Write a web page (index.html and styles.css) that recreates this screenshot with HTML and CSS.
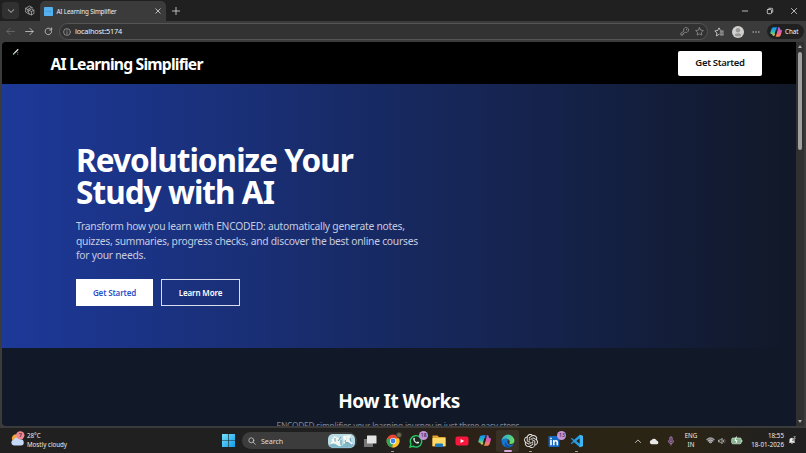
FILE: index.html
```html
<!DOCTYPE html>
<html lang="en">
<head>
<meta charset="utf-8">
<title>AI Learning Simplifier</title>
<link rel="stylesheet" href="styles.css">
</head>
<body>
<svg class="defs" width="0" height="0" aria-hidden="true">
  <defs>
    <linearGradient id="copA" x1="0" y1="0" x2="0" y2="1"><stop offset="0" stop-color="#168cf0"/><stop offset=".5" stop-color="#25b9c5"/><stop offset="1" stop-color="#e2cf35"/></linearGradient>
    <linearGradient id="copB" x1="0" y1="0" x2="0" y2="1"><stop offset="0" stop-color="#a267ed"/><stop offset=".55" stop-color="#ed5c9b"/><stop offset="1" stop-color="#fa8950"/></linearGradient>
    <linearGradient id="edgeA" x1="0" y1="0" x2="1" y2=".4"><stop offset="0" stop-color="#27a5e8"/><stop offset="1" stop-color="#66dc65"/></linearGradient>
    <linearGradient id="win" x1="0" y1="0" x2="1" y2="1"><stop offset="0" stop-color="#73e0fc"/><stop offset="1" stop-color="#109de9"/></linearGradient>
    <symbol id="copilot" viewBox="0 0 24 24">
      <path d="M16 2.500h1.500c1.500 0 2 1 2.500 3l.5 2H22c2 0 2 2 1.500 4l-1.800 6c-.8 2.500-2 4-4 4H9.500c1.500 0 2.300-1 2.800-3l3-11c.6-2 1.200-3 .7-5z" fill="url(#copB)"/>
      <path d="M8 2.500h8c-1.500 0-2.500 1-3 3l-3 11c-.5 2-1.300 3-3 3-1.500 0-2-1-2.500-2.500L4 16H2.500C.5 16 .5 14 1 12l2-6c.8-2.200 2.500-3.500 5-3.500z" fill="url(#copA)"/>
      <path d="M11.500 8h3.200l-2.300 8H9.200z" fill="#202020"/>
    </symbol>
  </defs>
</svg>
<div class="desktop">
  <header class="tabstrip">
    <span class="tab-menu"><svg class="i8" viewBox="0 0 8 8"><path class="ln" d="M1.200 2.700 4 5.400l2.800-2.700"/></svg></span>
    <svg class="workspaces" viewBox="0 0 20 20"><path class="ln w2" d="M10 17 3 13V6l7-4 6 3.500M3 6l4 2.300M7 12V8l6-3.500M9 9.500l4.500-2.300L18 9.500v6L13.500 18 9 15.500zM9 9.500l4.500 2.300L18 9.500M13.500 12v6"/></svg>
    <div class="tab">
      <svg class="favicon" viewBox="0 0 9 9"><rect width="9" height="9" rx=".7" fill="#54b0ee"/><path d="M1.500 4.500h1.200m.6-.4h1.200m.7.600h2" stroke="#1680cf" stroke-width=".5"/></svg>
      <span class="tab-title">AI Learning Simplifier</span>
      <svg class="tab-close" viewBox="0 0 8 8"><path class="ln" d="m1.800 1.800 4.400 4.400m0-4.400L1.800 6.200"/></svg>
    </div>
    <svg class="new-tab" viewBox="0 0 8 8"><path class="ln" d="M4 .2v7.600M.2 4h7.600"/></svg>
    <div class="window-controls">
      <svg class="i8" viewBox="0 0 8 8"><path class="ln" d="M1.300 4h5.400"/></svg>
      <svg class="i8" viewBox="0 0 8 8"><rect class="ln" x="1.300" y="2.500" width="4.200" height="4.200" rx=".7"/><path class="ln" d="M2.800 1.300h3q.9 0 .9.900v3"/></svg>
      <svg class="i8" viewBox="0 0 8 8"><path class="ln" d="m1.400 1.400 5.200 5.200m0-5.200L1.400 6.600"/></svg>
    </div>
  </header>

  <div class="toolbar">
    <svg class="nav dim" viewBox="0 0 10 10"><path class="ln" d="M9.300 5H1m3.500-3.500L1 5l3.500 3.500"/></svg>
    <svg class="nav" viewBox="0 0 10 10"><path class="ln" d="M.7 5H9M5.500 1.500 9 5 5.500 8.500"/></svg>
    <svg class="nav" viewBox="0 0 10 10"><path class="ln" d="M8.500 5A3.600 3.600 0 1 1 7.400 2.300L8.500 3.300M8.500 1v2.400H6.200"/></svg>
    <div class="address">
      <svg class="info" viewBox="0 0 8 8"><circle class="ln thin" cx="4" cy="4" r="3.400"/><path class="ln thin" d="M4 3.600V6M4 2v.3"/></svg>
      <span class="url">localhost:5174</span>
      <svg class="key" viewBox="0 0 10 10"><path class="ln thin" d="M4.100 4.300A2.800 2.800 0 1 1 6 6L5 6.200 4.600 7H3.800v.9H3V9H1V7.300z"/><circle cx="7.200" cy="2.900" r=".6" fill="#aaa"/></svg>
      <svg class="star" viewBox="0 0 10 10"><path class="ln thin" d="m5 .8 1.300 2.700 3 .4-2.200 2.100.5 3L5 7.600 2.400 9l.5-3L.7 3.900l3-.4z"/></svg>
    </div>
    <svg class="favs" viewBox="0 0 10 10"><path class="ln" d="M5.200 7.300 2.400 8.900l.5-2.900L.8 3.900l2.900-.4L5 .9l1.100 2M6.300 4.100h3M6.300 6h3M6.500 7.900h2.800"/></svg>
    <svg class="avatar" viewBox="0 0 12 12"><circle cx="6" cy="6" r="6" fill="#d2d0ce"/><circle cx="6" cy="4.300" r="2.200" fill="#9a9896"/><path d="M2.600 9.500c0-3 6.800-3 6.800 0Q6 11.500 2.600 9.500" fill="#9a9896"/></svg>
    <svg class="dots" viewBox="0 0 8 8"><path d="M.5 3.500h1.300v1.100H.5zm2.800 0h1.300v1.100H3.300zm2.800 0h1.300v1.100H6.100z" fill="#ddd"/></svg>
    <div class="chat"><svg viewBox="0 0 24 24"><use href="#copilot"/></svg><span>Chat</span></div>
  </div>

  <div class="viewport">
    <main class="page">
      <nav class="site-nav">
        <svg class="mark" viewBox="0 0 8 8"><path d="M1.200 6.400 6.200 1.300" stroke="#e4e4e4" stroke-width="1.300"/><path d="m1 6.900 2.200-2.100M5.300 4.500h1M5.100 6.200h1" stroke="#55a15e" stroke-width="1"/></svg>
        <span class="brand">AI Learning Simplifier</span>
        <a class="nav-cta"><span>Get Started</span></a>
      </nav>
      <section class="hero">
        <h1>Revolutionize Your<br>Study with AI</h1>
        <p>Transform how you learn with ENCODED: automatically generate notes,<br>quizzes, summaries, progress checks, and discover the best online courses<br>for your needs.</p>
        <div class="actions">
          <a class="btn primary">Get Started</a>
          <a class="btn outline">Learn More</a>
        </div>
      </section>
      <section class="how">
        <h2>How It Works</h2>
        <p>ENCODED simplifies your learning journey in just three easy steps.</p>
      </section>
    </main>
    <div class="scrollbar"><span class="up"></span><span class="thumb"></span><span class="down"></span></div>
  </div>

  <footer class="taskbar">
    <div class="weather">
      <svg viewBox="0 0 16 17"><circle cx="6.500" cy="8" r="4.500" fill="#f2a33c"/><path d="M4 15.500a3.200 3.200 0 0 1 0-6.300 4 4 0 0 1 7-.5 3.400 3.400 0 0 1 .5 6.800z" fill="#c5dafa"/><circle cx="11" cy="4.500" r="4.400" fill="#ee8890"/><path d="M9.500 2.800h3L10.700 6.500" fill="none" stroke="#542a35" stroke-width=".8"/></svg>
      <div><span class="temp">28°C</span><span class="cloudy">Mostly cloudy</span></div>
    </div>
    <svg class="start" viewBox="0 0 13 13"><path fill="url(#win)" d="M0 0h6.200v6.200H0zm6.800 0H13v6.200H6.800zM0 6.800h6.200V13H0zm6.800 0H13V13H6.800z"/></svg>
    <div class="search">
      <svg class="lens" viewBox="0 0 9 9"><circle class="ln" cx="3.700" cy="3.700" r="2.800"/><path class="ln" d="m5.800 5.800 2.400 2.400"/></svg>
      <span>Search</span>
      <svg class="art" viewBox="0 0 27 14"><rect width="27" height="14" rx="5" fill="#b9dce4"/><path d="M2 11 6 2l5 2 2 8zM15 2l8-1-2 7-5 2z" fill="#f0f6ef"/><path d="M1 11q5-3 8 0t7-1 10 1q-2 3-6 2.700H6Q2 14 1 11" fill="#80b7c9"/><path d="M7 4v4M10 7l3-4M13 6v5M18 4l-1 4 3 1M22 4l1 4" stroke="#4a8baa" stroke-width=".8" fill="none"/><path d="m4 5 3 4m9-7 2 4m3 1 3 3" stroke="#fff" stroke-width="1.200"/></svg>
    </div>
    <div class="apps">
      <span class="app"><svg viewBox="0 0 14 14"><rect x="1" y="5" width="9" height="8" fill="#777"/><rect x="4" y="1.500" width="9.500" height="8" rx=".5" fill="#e4e4e4"/></svg></span>
      <span class="app run"><svg viewBox="0 0 14 14"><circle cx="7" cy="7" r="6.500" fill="#e84636"/><path d="M7 7 1.300 3.900A6.500 6.500 0 0 0 6.500 13.500z" fill="#2fa854"/><path d="M7 7 6.400 13.500A6.500 6.500 0 0 0 13 4.500H7z" fill="#fbc52c"/><circle cx="7" cy="7" r="3.100" fill="#fff"/><circle cx="7" cy="7" r="2.400" fill="#3e82ee"/></svg><i class="profile"></i></span>
      <span class="app"><svg viewBox="0 0 14 14"><path d="m1 13 .9-3.100A5.700 5.700 0 1 1 4 12.200z" fill="#1d2620" stroke="#25c763" stroke-width="1.400"/><path d="M4.400 4.200c.7-1 1.400-.1 1.700.8L5.500 6c.7 1.300 1.400 1.800 2.400 2.300l.9-.7c1.700.7 1.700 1 .9 1.700C7.500 10.800 3.600 6.700 4.400 4.200" fill="#e3f5e7"/></svg><b class="badge">18</b></span>
      <span class="app"><svg viewBox="0 0 14 14"><path d="M.5 1.500h5L7 3h6.500v9.500H.5z" fill="#e5a52c"/><path d="M.5 4h13v8H.5z" fill="#ffda68"/><path d="M3 13v-2.500q0-1 1-1h6q1 0 1 1V13z" fill="#1b76bb"/></svg></span>
      <span class="app"><svg viewBox="0 0 14 14"><rect x=".5" y="2.500" width="13" height="9" rx="2" fill="#fa173d"/><path d="m5.600 4.900 3.600 2.100-3.600 2.100z" fill="#fff"/></svg></span>
      <span class="app"><svg class="cop" viewBox="0 0 24 24"><use href="#copilot"/></svg></span>
      <span class="app active"><svg viewBox="0 0 14 14"><path d="M.6 7A6.400 6.400 0 0 1 13.400 7c0 2-1.600 3-3.500 3-1.700 0-1.800-.7-1.300-1.500C9.800 5 4 3 .6 7" fill="url(#edgeA)"/><path d="M.6 7.200C1.500 4 6.500 3.600 7.500 6c-2 .5-1.700 5 2.500 4.900q1.400 0 2.600-.8A6.400 6.400 0 0 1 .6 7.200" fill="#1676d2"/><path d="M4.700 8c0 3 3 4.600 6.500 3.600A6.400 6.400 0 0 1 6 13.400C3.500 12 3.200 9 4.700 8" fill="#104d9d"/></svg></span>
      <span class="app run"><svg viewBox="0 0 24 24"><path fill="#e8e8e8" d="M22.282 9.821a5.985 5.985 0 0 0-.516-4.911 6.046 6.046 0 0 0-6.510-2.900A6.065 6.065 0 0 0 4.981 4.182a5.985 5.985 0 0 0-3.998 2.900 6.046 6.046 0 0 0 .743 7.097 5.980 5.980 0 0 0 .511 4.911 6.051 6.051 0 0 0 6.515 2.900A5.985 5.985 0 0 0 13.260 24a6.056 6.056 0 0 0 5.772-4.206 5.990 5.990 0 0 0 3.998-2.900 6.056 6.056 0 0 0-.748-7.073zM13.260 22.430a4.476 4.476 0 0 1-2.876-1.041l.141-.080 4.779-2.758a.795.795 0 0 0 .393-.681v-6.737l2.020 1.169a.071.071 0 0 1 .038.052v5.583a4.504 4.504 0 0 1-4.495 4.493zM3.600 18.304a4.471 4.471 0 0 1-.535-3.014l.142.085 4.783 2.759a.771.771 0 0 0 .780 0l5.843-3.369v2.332a.080.080 0 0 1-.033.062L9.740 19.950a4.500 4.500 0 0 1-6.140-1.646zM2.341 7.896a4.485 4.485 0 0 1 2.365-1.973V11.600a.766.766 0 0 0 .388.677l5.815 3.354-2.020 1.169a.076.076 0 0 1-.071 0l-4.830-2.786A4.504 4.504 0 0 1 2.341 7.872zm16.596 3.855-5.833-3.387L15.119 7.200a.076.076 0 0 1 .071 0l4.830 2.791a4.494 4.494 0 0 1-.676 8.105v-5.678a.790.790 0 0 0-.407-.667zm2.011-3.023-.142-.085-4.774-2.782a.776.776 0 0 0-.785 0L9.409 9.230V6.897a.066.066 0 0 1 .028-.061l4.830-2.787a4.499 4.499 0 0 1 6.681 4.660zM8.307 12.863l-2.020-1.164a.080.080 0 0 1-.038-.057V6.074a4.499 4.499 0 0 1 7.376-3.453l-.142.080-4.778 2.758a.795.795 0 0 0-.393.681zm1.097-2.365L12.006 8.998l2.607 1.500v2.999l-2.597 1.500-2.607-1.500z"/></svg></span>
      <span class="app"><svg viewBox="0 0 14 14"><rect x="1.500" y="2" width="11" height="11" rx="1" fill="#1268c3"/><path d="M3.200 6h1.600v5.200H3.200zm0-2.200h1.600v1.400H3.200zM6 6h1.500v.7c.9-1.200 3.600-1.100 3.600 1.500v3H9.500V8.500C9.500 7 7.600 7 7.600 8.500v2.700H6z" fill="#fff"/></svg><b class="badge">13</b></span>
      <span class="app run"><svg viewBox="0 0 14 14"><path d="M9.800.7 13 2.100v9.800l-3.200 1.400L4 8.200l-2.300 1.900L.7 9.500 3.200 7 .7 4.500l1-.6L4 5.800zm0 3.500L6.300 7l3.500 2.800z" fill="#239ce4"/><path d="M9.800.7 13 2.100v9.800l-3.200 1.400z" fill="#42b5f3"/></svg></span>
    </div>
    <div class="tray">
      <svg class="chev" viewBox="0 0 8 8"><path class="ln" d="m1.500 5.500 2.500-2.600 2.500 2.600"/></svg>
      <svg class="cloud" viewBox="0 0 10 8"><path d="M2.500 7.300A2.200 2.200 0 0 1 2.600 3a3 3 0 0 1 5.300.8 1.800 1.800 0 0 1 .1 3.500z" fill="#e8e8e8"/></svg>
      <svg class="mic" viewBox="0 0 8 10"><rect x="2.800" y=".8" width="2.400" height="5.300" rx="1.200" fill="#5d3b67" stroke="#c292d0" stroke-width=".7"/><path d="M1.400 4.500c0 4 5.200 4 5.200 0M4 7.500v2" fill="none" stroke="#c292d0" stroke-width=".8"/></svg>
      <div class="lang"><span>ENG</span><span>IN</span></div>
      <svg class="wifi" viewBox="0 0 10 9"><path d="M.7 3.400q4.300-4 8.600 0L5 8.200z" fill="#777"/><path class="ln" d="M.7 3.400q4.300-4 8.600 0M2.200 5q2.800-2.500 5.600 0M3.700 6.500q1.300-1 2.600 0"/></svg>
      <svg class="sound" viewBox="0 0 9 9"><path class="ln" d="M1 3.500h1.500L4.500 1.500v6l-2-2H1zM6 3.300q1 1.200 0 2.400"/><path d="M7.200 2q2 2.500 0 5" fill="none" stroke="#777" stroke-width=".7"/></svg>
      <svg class="battery" viewBox="0 0 12 9"><rect x=".7" y="2" width="9.600" height="5.800" rx="1.400" fill="#83b38c" stroke="#d9e5da" stroke-width=".7"/><path d="M10.800 4v2" stroke="#ddd"/><path d="M5.500.5 4 4.500h2L5 7" stroke="#f1fff2" stroke-width="1" fill="none"/></svg>
      <div class="clock"><span>18:55</span><span>18-01-2026</span></div>
      <svg class="bell" viewBox="0 0 9 10"><path d="M1 7.500 1.700 6V3.700a3 3 0 0 1 5.600 0V6L8 7.500zM3.300 8h2.400q-1.200 1.800-2.400 0" fill="#eee"/><path d="M4.800 3.200h1.700L5 5.200h1.700" stroke="#222" stroke-width=".6" fill="none"/><path d="M6.300.6h2L6.700 2.600h2" stroke="#eee" stroke-width=".6" fill="none"/></svg>
    </div>
  </footer>
</div>
</body>
</html>
```
FILE: styles.css
```css
* { box-sizing: border-box; }
body { margin: 0; overflow: hidden; background: #3b3b3b; font-family: "Noto Sans", "Open Sans", sans-serif; color: #fff; }
svg { display: block; flex: none; }
span { white-space: nowrap; }
.defs { position: absolute; }
.desktop { width: 806px; height: 453px; display: flex; flex-direction: column; }
.ln { fill: none; stroke: #ddd; stroke-width: .8; stroke-linecap: round; stroke-linejoin: round; }
.ln.thin { stroke: #aaa; stroke-width: .7; }
.ln.w2 { stroke: #bbb; stroke-width: 1.300; }
.i8 { width: 8px; height: 8px; }

.tabstrip { height: 21px; flex: none; display: flex; align-items: center; background: #202020; }
.tab-menu { width: 17px; height: 17px; margin-left: 2px; border-radius: 4px; background: #313131; display: grid; place-items: center; }
.workspaces { width: 11px; height: 11px; margin-left: 5px; }
.tab { width: 126px; height: 20px; margin: 1px 0 0 5px; padding-left: 4px; border-radius: 5px 5px 0 0; background: #3b3b3b; display: flex; align-items: center; }
.favicon { width: 9px; height: 9px; }
.tab-title { margin-left: 3.500px; width: 60px; font-size: 6.300px; letter-spacing: -.17px; color: #eee; }
.tab-close { width: 8px; height: 8px; margin-left: 37px; }
.new-tab { width: 8px; height: 8px; margin-left: 6px; }
.window-controls { margin-left: auto; padding-right: 8px; display: flex; gap: 16.500px; }

.toolbar { height: 21px; flex: none; display: flex; align-items: center; background: #3b3b3b; padding-left: 6px; }
.nav { width: 9px; height: 9px; margin-right: 10px; }
.dim { opacity: .35; }
.address { width: 649px; height: 17px; margin-left: -4px; border: 1px solid #555; border-radius: 9px; background: #323232; display: flex; align-items: center; padding: 0 3px 0 3px; }
.info { width: 8px; height: 8px; }
.url { margin-left: 4px; margin-top: -1px; font-size: 7.300px; letter-spacing: -.17px; color: #f0f0f0; }
.key { width: 9px; height: 9px; margin-left: auto; }
.star { width: 9px; height: 9px; margin-left: 6px; }
.favs { width: 10px; height: 10px; margin-left: 6px; }
.avatar { width: 12px; height: 12px; margin-left: 8px; }
.dots { width: 8px; height: 8px; margin-left: 8px; }
.chat { width: 37px; height: 15px; margin-left: 7px; border-radius: 8px; background: #202020; display: flex; align-items: center; font-size: 6.200px; }
.chat svg { width: 12px; height: 12px; margin: 0 3px; }

.viewport { height: 384px; flex: none; margin-left: 2px; display: flex; }
.page { width: 794px; height: 384px; overflow: hidden; background: #111827; border-radius: 4px 0 0 4px; }
.site-nav { height: 42px; background: #000; display: flex; align-items: center; }
.mark { width: 8px; height: 8px; margin: -22px 0 0 10px; }
.brand { margin: 2px auto 0 30.500px; font-size: 15.700px; font-weight: 700; letter-spacing: -.8px; }
.nav-cta { width: 84px; height: 25px; margin: 0 34px 0 0; padding-bottom: 2px; border-radius: 2px; background: #fff; color: #141414; display: grid; place-items: center; font-size: 9.500px; font-weight: 600; letter-spacing: -.33px; }
.hero { height: 264px; padding: 60px 0 0 74px; background: linear-gradient(to right, #1d3999, #111827); }
.hero h1 { margin: 0; font-size: 31.500px; line-height: 31.500px; font-weight: 700; letter-spacing: -.95px; }
.hero p { margin: 12px 0 0; font-size: 10.300px; line-height: 14.700px; letter-spacing: -.25px; color: #c5cce0; }
.actions { display: flex; gap: 8px; margin-top: 16px; }
.btn { display: grid; place-items: center; height: 27px; font-size: 8px; font-weight: 600; letter-spacing: -.13px; }
.primary { width: 77px; padding-bottom: 1px; background: #fff; color: #2b50c8; }
.outline { width: 79px; border: 1px solid #d9deed; }
.how { padding-top: 40px; text-align: center; }
.how h2 { margin: 0; font-size: 19px; line-height: 26px; font-weight: 700; letter-spacing: -.5px; }
.how p { margin: 5px 0 0; font-size: 8.300px; line-height: 14px; letter-spacing: -.2px; color: #818895; }

.scrollbar { width: 8px; background: #303030; display: flex; flex-direction: column; align-items: center; }
.up { border: 2px solid transparent; border-top: 0; border-bottom: 3px solid #aaa; margin: 3px 0 4px; }
.thumb { width: 4px; height: 98px; border-radius: 2px; background: #a0a0a0; }
.down { border: 2px solid transparent; border-bottom: 0; border-top: 3px solid #aaa; margin-top: auto; margin-bottom: 3px; }

.taskbar { height: 25px; margin-top: 2px; flex: none; display: flex; align-items: center; background: linear-gradient(to right, #202020 0 45%, #2c2117 57%, #2a2415 75%, #2b2415 85%, #202020 97%); }
.weather { width: 222px; padding-left: 10px; display: flex; align-items: center; gap: 2px; font-size: 6.200px; line-height: 8.500px; color: #eee; }
.weather svg { width: 15px; height: 16px; margin-top: -3px; }
.temp, .cloudy { display: block; }
.start { width: 13px; height: 13px; }
.search { width: 115px; height: 17px; margin-left: 7px; border-radius: 9px; background: #3c3c3c; display: flex; align-items: center; padding: 0 2px 0 6px; font-size: 7.200px; letter-spacing: -.1px; color: #ddd; }
.lens { width: 8px; height: 8px; margin-right: 5px; }
.art { width: 27px; height: 14px; margin-left: auto; }
.apps { display: flex; margin-left: 1px; }
.app { position: relative; width: 23.050px; height: 22px; display: grid; place-items: center; border-radius: 2px; }
.app svg { width: 14px; height: 14px; }
.app .cop { width: 13px; height: 13px; }
.active { background: #393126; }
.run::after, .active::after { content: ""; position: absolute; bottom: 0; width: 3px; height: 1px; border-radius: 1px; background: #aaa; }
.active::after { width: 8px; height: 1.500px; background: #d7a7db; }
.badge { position: absolute; top: 1px; right: -1px; width: 9px; height: 9px; border-radius: 50%; background: #c494d4; color: #32203a; font-size: 5px; line-height: 9px; text-align: center; font-weight: 500; }
.profile { position: absolute; top: 2px; right: 2px; width: 6px; height: 6px; border-radius: 50%; background: #6c6d50; border: 1px solid #3c3d31; }
.tray { margin-left: auto; display: flex; align-items: center; padding-right: 10px; font-size: 6.200px; line-height: 8.500px; color: #eee; }
.lang, .clock { display: flex; flex-direction: column; }
.chev { width: 8px; height: 8px; margin-right: 7px; }
.cloud { width: 10px; height: 8px; margin-right: 8px; }
.mic { width: 8px; height: 10px; margin-right: 8px; }
.lang { width: 16px; margin-right: 7px; align-items: center; }
.wifi { width: 9px; height: 9px; margin-right: 3px; }
.sound { width: 8px; height: 8px; margin-right: 5px; }
.battery { width: 12px; height: 9px; margin-right: 4px; }
.clock { width: 37px; align-items: flex-end; margin-right: 4px; letter-spacing: .05px; }
.bell { width: 8px; height: 9px; }
```
